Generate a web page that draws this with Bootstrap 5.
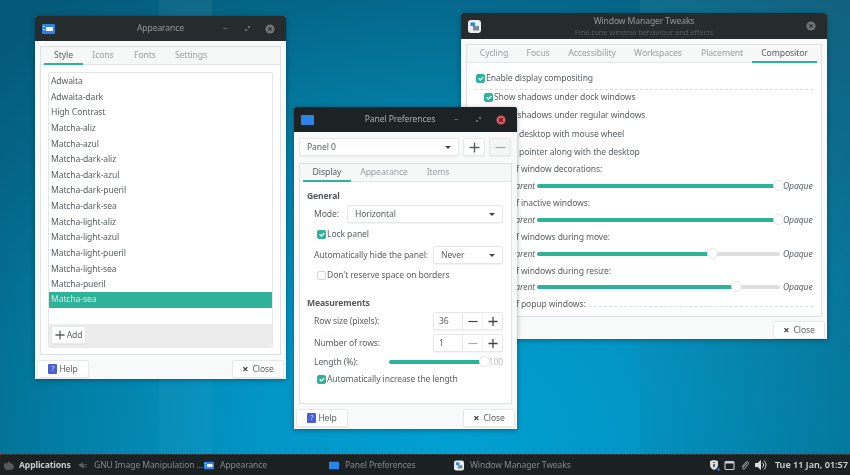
<!DOCTYPE html>
<html lang="en">
<head>
    <meta charset="UTF-8">
    <meta name="viewport" content="width=device-width, initial-scale=1.0">
    <title>Xfce desktop</title>
    <link href="https://cdn.jsdelivr.net/npm/bootstrap@5.3.0/dist/css/bootstrap.min.css" rel="stylesheet">
    <script src="https://cdn.jsdelivr.net/npm/bootstrap@5.3.0/dist/js/bootstrap.bundle.min.js"></script>
    <style>
        html, body { width: 850px; height: 475px; overflow: hidden; margin: 0; }
        body { font-family: "Noto Sans", "Open Sans", sans-serif; font-size: 8.6px; letter-spacing: -.12px; line-height: 14px; color: #5a5f62; }
        .desk {
            position: relative; width: 850px; height: 475px; overflow: hidden; filter: blur(.4px);
            background:
                linear-gradient(180deg, rgba(255,255,255,.05), rgba(255,255,255,.025)) 159px 0 / 53px 100% no-repeat,
                linear-gradient(180deg, rgba(255,255,255,.05), rgba(0,0,0,.04)) 640px 0 / 210px 100% no-repeat,
                radial-gradient(ellipse 640px 560px at 53% 95%, #019fd2 0%, #0296c6 30%, #0380a8 58%, #04678a 82%, #045a7a 100%),
                #04506c;
        }
        svg { flex: none; }
        .win { position: absolute; background: #f8f9f9; box-shadow: 0 1px 5px rgba(0,0,0,.35); border-radius: 2px 2px 0 0; display: flex; flex-direction: column; }
        #w-appearance { left: 35px; top: 16px; width: 251px; height: 363px; }
        #w-panel { left: 294px; top: 107px; width: 223px; height: 322px; z-index: 3; }
        #w-tweaks { left: 461px; top: 13px; width: 366px; height: 326px; }
        .head { height: 25px; flex: none; background: #262b2d; color: #95999b; position: relative; display: flex; align-items: center; border-radius: 2px 2px 0 0; }
        #w-panel .head { background: #1d2224; color: #a9adaf; }
        #w-tweaks .head { height: 26px; }
        .head-title { position: absolute; left: 0; right: 0; text-align: center; font-size: 8.6px; line-height: 11px; }
        #w-panel .head-title { right: 11px; }
        #w-tweaks .head-title { top: 3px; }
        .head-sub { font-size: 7.6px; line-height: 11px; color: #555b5d; }
        .head-btns { margin-left: auto; display: flex; align-items: center; position: relative; }
        .head-ico { position: relative; margin-left: 7px; }
        .head-x { margin: 0 11px 0 7px; }
        .minb { width: 22px; height: 12px; text-align: center; line-height: 10px; color: #7d8183; }
        .tabsheet { border: 1px solid #dfe1e2; background: #fff; display: flex; flex-direction: column; }
        .tabstrip { height: 18px; flex: none; background: #f6f7f7; border-bottom: 1px solid #e3e5e6; flex-wrap: nowrap; }
        .tabstrip .nav-link { padding: 0; height: 18px; line-height: 16px; text-align: center; color: #9b9fa1; font-size: 8.7px; }
        .tabstrip .nav-link.active { color: #5a5f62; border-bottom: 2px solid #2eb398; }
        .sheet-a { margin: 5px 5px 0; height: 309px; }
        .sheet-a .tabstrip { padding-left: 3px; }
        .ta1 { width: 39px; } .ta2 { width: 40px; } .ta3 { width: 44px; } .ta4 { width: 48px; }
        .themes { margin: 7px 7px 0; height: 276px; border: 1px solid #e4e6e7; border-radius: 2px; background: #fff; display: flex; flex-direction: column; }
        .themes .list-group { flex: 1 1 auto; padding-top: 1px; }
        .themes .list-group-item { border: 0; border-radius: 0; padding: 0 2px; height: 15.65px; line-height: 15.65px; color: #5a5f62; background: transparent; font-size: 8.6px; }
        .themes .list-group-item.active { background: #2eb398; color: #cdeee6; }
        .toolstrip { height: 23px; flex: none; background: #ececec; padding: 2px 2px; border-radius: 0 0 2px 2px; }
        .gbtn { --bs-btn-padding-x: 0; --bs-btn-padding-y: 0; --bs-btn-font-size: 8.6px; --bs-btn-color: #5a5f62; --bs-btn-bg: #fff; --bs-btn-border-color: #e6e8e9; --bs-btn-border-radius: 2px; --bs-btn-line-height: 16px; --bs-btn-hover-bg: #fff; display: flex; align-items: center; justify-content: center; letter-spacing: -.12px; box-shadow: 0 1px 1px rgba(0,0,0,.05); }
        .addb { width: 35px; height: 18px; gap: 2px; }
        .foot { display: flex; justify-content: space-between; padding: 0 2px; margin-top: 5px; }
        .footb { width: 52px; height: 18px; gap: 2px; }
        .help-ico { width: 9px; height: 10px; background: #4a5fd6; color: #dde; font-size: 7px; line-height: 10px; text-align: center; border-radius: 1px; }
        .x-ico { font-size: 11px; line-height: 10px; color: #3e4244; margin-right: 2px; font-weight: 700; }
        .panel-pick { margin: 6px 5px 0; gap: 4px; height: 18px; }
        .combo { --bs-btn-padding-x: 7px; justify-content: space-between; height: 18px; text-align: left; }
        .combo.dropdown-toggle::after { border-top-width: 3.5px; border-left-width: 3.5px; border-right-width: 3.5px; border-bottom: 0; color: #444; margin: 0; }
        .combo-wide { width: 160px; }
        .iconb { width: 22px; height: 18px; }
        .iconb-off { background: #f4f5f5; color: #a9adaf; }
        .sheet-p { margin: 7px 5px 0; height: 241px; }
        .sheet-p .tabstrip { padding-left: 3px; }
        .t1 { width: 48px; } .t2 { width: 66px; } .t3 { width: 42px; }
        .panel-body-x { padding: 7px 8px 0 7px; }
        .sec-title { font-weight: 700; height: 14px; color: #55595c; }
        .f-row { display: flex; align-items: center; padding-left: 7px; }
        .f-row .grow { flex: 1 1 auto; }
        .check-line { display: flex; align-items: center; height: 14px; margin-left: 10px; margin-bottom: 0; }
        .check-line .form-check-input { width: 9px; height: 9px; margin: 0 1px 0 0; flex: none; border: 1px solid #d3d6d7; border-radius: 2px; background-size: 8px; }
        .form-check-input:checked { background-color: #2eb398; border-color: #2eb398; }
        .mode-combo { width: 156px; }
        .hide-combo { width: 70px; }
        .spin { width: 70px; height: 18px; display: flex; border: 1px solid #e6e8e9; border-radius: 2px; background: #fff; box-shadow: 0 1px 1px rgba(0,0,0,.05); }
        .spin-val { width: 29px; padding-left: 5px; line-height: 16px; border-right: 1px solid #e6e8e9; }
        .spin-b { flex: 1; display: flex; align-items: center; justify-content: center; color: #444; }
        .spin-b + .spin-b { border-left: 1px solid #eef0f0; }
        .spin-off { color: #a9adaf; }
        .m2 { margin-top: 2px; } .m3 { margin-top: 3px; } .m4 { margin-top: 4px; } .m5 { margin-top: 5px; } .m14 { margin-top: 14px; }
        .slide { position: relative; height: 4px; border-radius: 2px; background: #dcdedf; }
        .slide-fill { position: absolute; left: 0; top: 0; height: 4px; border-radius: 2px; background: #2eb398; }
        .slide-knob { position: absolute; top: -4px; width: 11px; height: 11px; margin-left: -5.5px; border-radius: 50%; background: #fff; border: 1px solid #e2e4e5; }
        .len-slide { width: 95px; }
        .len-val { color: #b9bcbe; width: 19px; text-align: right; }
        .sheet-t { margin: 5px 5px 0; height: 273px; }
        .sheet-t .tabstrip { padding-left: 5px; }
        .tt1 { width: 44px; } .tt2 { width: 44px; } .tt3 { width: 64px; } .tt4 { width: 68px; } .tt5 { width: 60px; } .tt6 { width: 65px; }
        .tweak-body { padding: 8px 8px 0; }
        .enable-line { margin-left: 1px; }
        .dash { border-top: 1px dashed #dcdedf; margin: 4px 0 -2px; }
        .sub-line { margin-left: 9px; height: 18.3px; }
        #opacityRows { margin-top: 1px; }
        .opa-title { margin-left: 4px; height: 14px; line-height: 14px; }
        .opa-row { display: flex; align-items: center; height: 19.8px; }
        .opa-end { font-style: italic; width: 60px; text-align: right; margin-right: 2px; }
        .opa-row .slide { width: 243px; }
        .opa-max { font-style: italic; margin-left: 3px; }
        .pop-line { display: flex; align-items: center; margin-left: 4px; }
        .pop-line .dash { flex: 1; margin: 5px 0 0 3px; }
        .t-foot { justify-content: flex-end; margin-top: 4px; }
        .taskbar { position: absolute; left: 0; right: 0; bottom: 0; height: 21px; padding: 0; background: #1b2123; border-top: 1px dotted #a01f2b; flex-wrap: nowrap; color: #84888a; z-index: 4; justify-content: flex-start; }
        .start { display: flex; align-items: center; gap: 4px; padding-left: 3px; width: 75px; color: #c9ccce; font-weight: 700; flex: none; }
        .task { width: 125px; flex: none; display: flex; align-items: center; gap: 6px; white-space: nowrap; padding-left: 4px; }
        .task-g { padding-left: 3px; }
        .tray { margin-left: auto; display: flex; align-items: center; gap: 4px; padding-right: 2px; }
        .clock { color: #d3d6d7; font-weight: 600; font-size: 9.1px; letter-spacing: 0; margin-left: 3px; white-space: nowrap; }
    </style>
</head>
<body>
<svg width="0" height="0" class="d-block position-absolute">
    <symbol id="i-blue" viewBox="0 0 13 10"><rect width="13" height="10" rx="1" fill="#2a83e6"/><rect x="4" y="3" width="7" height="4" fill="#fff"/><rect x="1" y="2" width="1.5" height="1" fill="#fff"/><rect x="1" y="5" width="1.5" height="1" fill="#fff"/></symbol>
    <symbol id="i-flat" viewBox="0 0 13 10"><rect width="13" height="10" rx=".5" fill="#2a83e6"/></symbol>
    <symbol id="i-tweak" viewBox="0 0 13 13"><rect width="13" height="13" rx="3" fill="#eceff1"/><rect x="2.5" y="2.5" width="4.5" height="3.5" fill="#2a83e6"/><rect x="5" y="6" width="6" height="4.5" fill="#7b8a94"/></symbol>
    <symbol id="i-close" viewBox="0 0 10 10"><circle cx="5" cy="5" r="4.6" fill="#6f7476"/><path d="M3.3 3.3l3.4 3.4M6.7 3.3L3.3 6.7" stroke="#2a2f31" stroke-width="1.1"/></symbol>
    <symbol id="i-close-r" viewBox="0 0 10 10"><circle cx="5" cy="5" r="4.6" fill="#d9535f"/><path d="M3.3 3.3l3.4 3.4M6.7 3.3L3.3 6.7" stroke="#2a1a1d" stroke-width="1.1"/></symbol>
    <symbol id="i-resize" viewBox="0 0 7 7"><path d="M1.5 5.5l1.5-1.5M4 3l1.5-1.5M3.8 1.5h1.7v1.7M1.5 3.8v1.7h1.7" stroke="#7a7e80" stroke-width=".8" fill="none"/></symbol>
    <symbol id="i-plus" viewBox="0 0 11 11"><path d="M5.5 .5v10M.5 5.5h10" stroke="currentColor" stroke-width="1.4"/></symbol>
    <symbol id="i-minus" viewBox="0 0 11 11"><path d="M.5 5.5h10" stroke="currentColor" stroke-width="1.3"/></symbol>
</svg>
<div class="desk">

    <!-- Appearance -->
    <div class="win" id="w-appearance">
        <div class="head">
            <svg class="head-ico" width="13" height="10"><use href="#i-blue"/></svg>
            <div class="head-title">Appearance</div>
            <div class="head-btns">
                <span class="minb">&#8211;</span>
                <span class="minb"><svg width="7" height="7"><use href="#i-resize"/></svg></span>
                <svg class="head-x" width="10" height="10"><use href="#i-close"/></svg>
            </div>
        </div>
        <div class="tabsheet sheet-a">
            <ul class="nav tabstrip">
                <li class="nav-item"><a class="nav-link active ta1" href="#">Style</a></li>
                <li class="nav-item"><a class="nav-link ta2" href="#">Icons</a></li>
                <li class="nav-item"><a class="nav-link ta3" href="#">Fonts</a></li>
                <li class="nav-item"><a class="nav-link ta4" href="#">Settings</a></li>
            </ul>
            <div class="themes">
                <div class="list-group" id="themeList"></div>
                <div class="toolstrip">
                    <button class="btn gbtn addb"><svg width="10" height="10"><use href="#i-plus"/></svg>Add</button>
                </div>
            </div>
        </div>
        <div class="foot">
            <button class="btn gbtn footb"><span class="help-ico">?</span>Help</button>
            <button class="btn gbtn footb"><span class="x-ico">&#215;</span>Close</button>
        </div>
    </div>

    <!-- Window Manager Tweaks -->
    <div class="win" id="w-tweaks">
        <div class="head">
            <svg class="head-ico" width="13" height="13"><use href="#i-tweak"/></svg>
            <div class="head-title">Window Manager Tweaks<div class="head-sub">Fine-tune window behaviour and effects</div></div>
            <div class="head-btns"><svg class="head-x" width="10" height="10"><use href="#i-close"/></svg></div>
        </div>
        <div class="tabsheet sheet-t">
            <ul class="nav tabstrip">
                <li class="nav-item"><a class="nav-link tt1" href="#">Cycling</a></li>
                <li class="nav-item"><a class="nav-link tt2" href="#">Focus</a></li>
                <li class="nav-item"><a class="nav-link tt3" href="#">Accessibility</a></li>
                <li class="nav-item"><a class="nav-link tt4" href="#">Workspaces</a></li>
                <li class="nav-item"><a class="nav-link tt5" href="#">Placement</a></li>
                <li class="nav-item"><a class="nav-link active tt6" href="#">Compositor</a></li>
            </ul>
            <div class="tweak-body">
                <label class="check-line enable-line"><input class="form-check-input" type="checkbox" checked>Enable display compositing</label>
                <div class="dash"></div>
                <label class="check-line sub-line"><input class="form-check-input" type="checkbox" checked>Show shadows under dock windows</label>
                <label class="check-line sub-line"><input class="form-check-input" type="checkbox" checked>Show shadows under regular windows</label>
                <label class="check-line sub-line"><input class="form-check-input" type="checkbox">Zoom desktop with mouse wheel</label>
                <label class="check-line sub-line"><input class="form-check-input" type="checkbox">Zoom pointer along with the desktop</label>
                <div id="opacityRows"></div>
                <div class="pop-line"><span>Opacity of popup windows:</span><div class="dash"></div></div>
            </div>
        </div>
        <div class="foot t-foot">
            <button class="btn gbtn footb"><span class="x-ico">&#215;</span>Close</button>
        </div>
    </div>

    <!-- Panel Preferences -->
    <div class="win" id="w-panel">
        <div class="head">
            <svg class="head-ico" width="13" height="10"><use href="#i-flat"/></svg>
            <div class="head-title">Panel Preferences</div>
            <div class="head-btns">
                <span class="minb">&#8211;</span>
                <span class="minb"><svg width="7" height="7"><use href="#i-resize"/></svg></span>
                <svg class="head-x" width="10" height="10"><use href="#i-close-r"/></svg>
            </div>
        </div>
        <div class="d-flex panel-pick">
            <button class="btn gbtn combo combo-wide dropdown-toggle">Panel 0</button>
            <button class="btn gbtn iconb"><svg width="11" height="11"><use href="#i-plus"/></svg></button>
            <button class="btn gbtn iconb iconb-off"><svg width="11" height="11"><use href="#i-minus"/></svg></button>
        </div>
        <div class="tabsheet sheet-p">
            <ul class="nav tabstrip">
                <li class="nav-item"><a class="nav-link active t1" href="#">Display</a></li>
                <li class="nav-item"><a class="nav-link t2" href="#">Appearance</a></li>
                <li class="nav-item"><a class="nav-link t3" href="#">Items</a></li>
            </ul>
            <div class="panel-body-x">
                <div class="sec-title">General</div>
                <div class="f-row m2"><span class="grow">Mode:</span><button class="btn gbtn combo mode-combo dropdown-toggle">Horizontal</button></div>
                <label class="check-line m4"><input class="form-check-input" type="checkbox" checked>Lock panel</label>
                <div class="f-row m5"><span class="grow">Automatically hide the panel:</span><button class="btn gbtn combo hide-combo dropdown-toggle">Never</button></div>
                <label class="check-line m4"><input class="form-check-input" type="checkbox">Don't reserve space on borders</label>
                <div class="sec-title m14">Measurements</div>
                <div class="f-row m2"><span class="grow">Row size (pixels):</span>
                    <div class="spin"><span class="spin-val">36</span><span class="spin-b"><svg width="10" height="11"><use href="#i-minus"/></svg></span><span class="spin-b"><svg width="10" height="11"><use href="#i-plus"/></svg></span></div></div>
                <div class="f-row m4"><span class="grow">Number of rows:</span>
                    <div class="spin"><span class="spin-val">1</span><span class="spin-b spin-off"><svg width="10" height="11"><use href="#i-minus"/></svg></span><span class="spin-b"><svg width="10" height="11"><use href="#i-plus"/></svg></span></div></div>
                <div class="f-row m3"><span class="grow">Length (%):</span>
                    <div class="slide len-slide"><div class="slide-fill" style="width: 100%"></div><div class="slide-knob" style="left: 100%"></div></div>
                    <span class="len-val">100</span></div>
                <label class="check-line m3"><input class="form-check-input" type="checkbox" checked>Automatically increase the length</label>
            </div>
        </div>
        <div class="foot">
            <button class="btn gbtn footb"><span class="help-ico">?</span>Help</button>
            <button class="btn gbtn footb"><span class="x-ico">&#215;</span>Close</button>
        </div>
    </div>

    <!-- Panel -->
    <nav class="navbar taskbar">
        <div class="start">
            <svg width="12" height="12" viewBox="0 0 12 12"><path d="M1 4l1 1 1-2 1 2 2-3 1 2c2 0 4 2 4 4 0 2-2 3-5 3S1 10 1 7z" fill="#55595b"/></svg>
            Applications
        </div>
        <div class="task task-g"><svg width="10" height="9" viewBox="0 0 11 9"><path d="M0 4l6-3-1 2h5v1H6v1h4v1H6l1 2z" fill="#5e6365"/></svg><span>GNU Image Manipulation ...</span></div>
        <div class="task"><svg width="10" height="9"><use href="#i-blue"/></svg>Appearance</div>
        <div class="task"><svg width="10" height="9"><use href="#i-flat"/></svg>Panel Preferences</div>
        <div class="task"><svg width="10" height="11"><use href="#i-tweak"/></svg>Window Manager Tweaks</div>
        <div class="tray">
            <svg width="11" height="12" viewBox="0 0 11 12"><path d="M1 2l4-1 4 1v4c0 3-2 4-4 5-2-1-4-2-4-5z" fill="#d8dadb"/><path d="M5 3v1M5 5v3" stroke="#1b2123" stroke-width="1.2"/><circle cx="9.5" cy="10.5" r="1.2" fill="#2a83e6"/></svg>
            <svg width="11" height="11" viewBox="0 0 11 11"><rect x="1" y="1.5" width="9" height="8" rx="1" fill="none" stroke="#c9ccce" stroke-width="1.1"/><rect x="1" y="1.5" width="9" height="2" fill="#c9ccce"/></svg>
            <svg width="11" height="12" viewBox="0 0 11 12"><path d="M8.5 3.5L4 8.5c-1 1.2 .6 2.4 1.6 1.3l3.6-4.6c1.4-1.8-1-3.6-2.4-1.9L3 8" fill="none" stroke="#a9adaf" stroke-width="1"/></svg>
            <svg width="14" height="12" viewBox="0 0 14 12"><path d="M1 4h2.5L7 1v10L3.5 8H1z" fill="#d8dadb"/><path d="M8.5 3.5a3.5 3.5 0 0 1 0 5M10 1.5a6 6 0 0 1 0 9" fill="none" stroke="#d8dadb"/></svg>
            <span class="clock">Tue 11 Jan, 01:57</span>
        </div>
    </nav>
</div>

<script>
    const themes = ['Adwaita', 'Adwaita-dark', 'High Contrast', 'Matcha-aliz', 'Matcha-azul', 'Matcha-dark-aliz',
        'Matcha-dark-azul', 'Matcha-dark-pueril', 'Matcha-dark-sea', 'Matcha-light-aliz', 'Matcha-light-azul',
        'Matcha-light-pueril', 'Matcha-light-sea', 'Matcha-pueril', 'Matcha-sea'];
    const themeList = document.getElementById('themeList');
    themes.forEach(name => {
        const row = document.createElement('div');
        row.className = 'list-group-item' + (name === 'Matcha-sea' ? ' active' : '');
        row.textContent = name;
        themeList.appendChild(row);
    });

    // Opacity sliders on the compositor tab
    const opacity = [['window decorations', 100], ['inactive windows', 100], ['windows during move', 72.4], ['windows during resize', 81.9]];
    document.getElementById('opacityRows').innerHTML = opacity.map(([label, value]) => `
        <div class="opa-title">Opacity of ${label}:</div>
        <div class="opa-row"><span class="opa-end">Transparent</span>
            <div class="slide"><div class="slide-fill" style="width: ${value}%"></div><div class="slide-knob" style="left: ${value === 100 ? 99.2 : value}%"></div></div>
            <span class="opa-max">Opaque</span></div>`).join('');
</script>
</body>
</html>
